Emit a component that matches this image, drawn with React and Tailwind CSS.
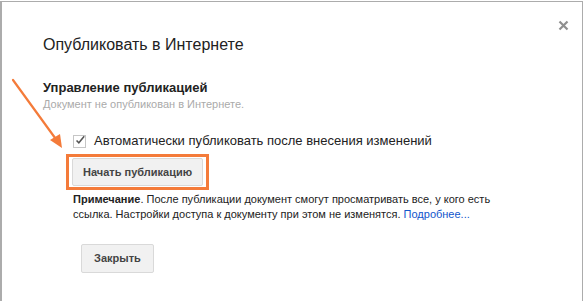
import React from "react";

const Arrow = () => (
  <svg className="absolute left-0 top-0" width="80" height="160" viewBox="0 0 80 160">
    <line x1="13" y1="80" x2="58" y2="142" stroke="#f47b3a" strokeWidth="2.2" strokeLinecap="round" />
    <path d="M62 148 L50 140 L60 134 Z" fill="#f47b3a" />
  </svg>
);

const App = () => {
  return (
    <div className="relative w-[586px] h-[301px] bg-white overflow-hidden" style={{ fontFamily: "Arial, 'Liberation Sans', sans-serif" }}>
      <div className="relative mt-px w-[583px] h-[300px] border-l-2 border-t border-r border-[#acacac] bg-white pl-[41px] pt-[33px]">
        <button className="absolute right-[13px] top-[17px] w-[12px] h-[12px] flex items-center justify-center">
          <svg width="11" height="11" viewBox="0 0 11 11">
            <path d="M1.5 1.5 L9.5 9.5 M9.5 1.5 L1.5 9.5" stroke="#8f8f8f" strokeWidth="2.2" />
          </svg>
        </button>
        <h1 className="text-[16px] leading-[20px] text-[#222]">Опубликовать в Интернете</h1>
        <h2 className="mt-[25px] text-[13px] leading-[16px] font-bold text-[#222]">Управление публикацией</h2>
        <p className="mt-[1px] text-[11px] leading-[14px] text-[#aaa]">Документ не опубликован в Интернете.</p>

        <div className="ml-[30px] mt-[22px]">
          <label className="flex items-center gap-[8px] text-[13px] leading-[16px] text-[#222]">
            <span className="w-[13px] h-[13px] border border-[#c6c6c6] bg-white flex items-center justify-center">
              <svg width="13" height="13" viewBox="0 0 13 13" className="-mt-[2px] ml-[1px]">
                <path d="M2 6.5 L5 9.5 L12 1" stroke="#555" strokeWidth="2" fill="none" />
              </svg>
            </span>
            Автоматически публиковать после внесения изменений
          </label>

          <div className="-ml-[7px] mt-[5px] inline-flex border-[3px] border-[#f47b3a] px-[3px] pt-[1px] pb-[1px]">
            <button className="h-[28px] px-[10px] bg-[#f1f1f1] border border-[#d9d9d9] rounded-[2px] text-[11px] font-bold text-[#444]">
              Начать публикацию
            </button>
          </div>

          <p className="mt-[2px] w-[440px] text-[11px] leading-[15px] text-[#222]">
            <b>Примечание</b>. После публикации документ смогут просматривать все, у кого есть<br />
            ссылка. Настройки доступа к документу при этом не изменятся.{" "}
            <a className="text-[#1155cc]">Подробнее...</a>
          </p>

          <button className="mt-[22px] ml-[8px] h-[29px] px-[12px] bg-[#f1f1f1] border border-[#d9d9d9] rounded-[2px] text-[11px] font-bold text-[#444]">
            Закрыть
          </button>
        </div>
      </div>
      <Arrow />
    </div>
  );
};

export default App;
